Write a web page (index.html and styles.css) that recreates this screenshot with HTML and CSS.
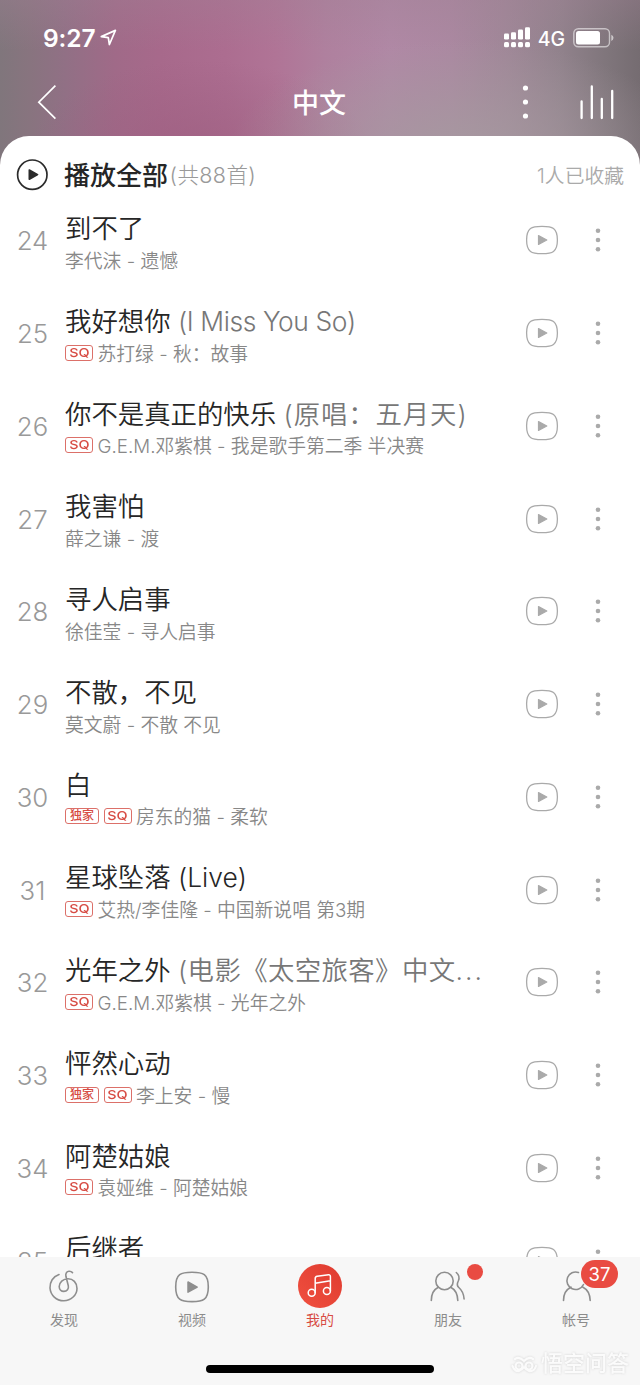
FILE: index.html
```html
<!DOCTYPE html>
<html lang="zh-CN">
<head>
<meta charset="utf-8">
<title>中文</title>
<link rel="stylesheet" href="styles.css">
</head>
<body>
<svg class="defs" width="0" height="0">
  <symbol id="mv" viewBox="0 0 34 30"><path d="M17 1.300C22 1.300 26 1.500 28.500 3.500 31.700 6 32.400 10 32.400 15S31.700 24 28.500 26.500C26 28.500 22 28.700 17 28.700S8 28.500 5.500 26.500C2.300 24 1.600 20 1.600 15S2.300 6 5.500 3.500C8 1.500 12 1.300 17 1.300Z" fill="none" stroke="currentColor" stroke-width="1.300"/><path d="M13.500 10.600V19.400L21.800 15Z" fill="currentColor" stroke="currentColor" stroke-width="1.200" stroke-linejoin="round"/></symbol>
  <symbol id="more" viewBox="0 0 6 26"><g fill="currentColor"><circle cx="3" cy="3.700" r="2.300"/><circle cx="3" cy="13" r="2.300"/><circle cx="3" cy="22.300" r="2.300"/></g></symbol>
</svg>
<div class="phone">
  <div class="status">
    <span class="time">9:27</span>
    <svg class="loc" width="17" height="17" viewBox="0 0 17 17"><path d="M1.300 7.600L15.400 1.400 9.400 15.500 8.300 8.600Z" fill="none" stroke="#fff" stroke-width="1.700" stroke-linejoin="round"/></svg>
    <svg class="signal" width="27" height="21" viewBox="0 0 27 21"><g fill="#fff"><rect x="0" y="6.500" width="5" height="6" rx="1.200"/><rect x="7" y="5.200" width="5" height="7.300" rx="1.200"/><rect x="14" y="2.500" width="5" height="10" rx="1.200"/><rect x="21" y="0.300" width="5" height="12.200" rx="1.200"/><rect x="0" y="15" width="5" height="5.200" rx="1.500"/><rect x="7" y="15" width="5" height="5.200" rx="1.500"/><rect x="14" y="15" width="5" height="5.200" rx="1.500"/><rect x="21" y="15" width="5" height="5.200" rx="1.500"/></g></svg>
    <span class="net">4G</span>
    <svg class="battery" width="42" height="20" viewBox="0 0 42 20"><rect x="0.800" y="0.800" width="35.700" height="18" rx="4.500" fill="none" stroke="#fff" stroke-opacity=".55" stroke-width="1.400"/><rect x="3" y="3" width="24" height="13.600" rx="2.500" fill="#fff"/><path d="M38.300 6.700Q40.500 7.500 40.500 9.800T38.300 12.900Z" fill="#fff" fill-opacity=".6"/></svg>
  </div>
  <div class="nav">
    <svg width="20" height="36" viewBox="0 0 20 36"><path d="M18.400 1.600L1.800 18.200 18.400 34.600" fill="none" stroke="#fff" stroke-width="1.700"/></svg>
    <h1 class="heading">中文</h1>
    <div class="nav-actions">
      <svg width="6" height="36" viewBox="0 0 6 36"><g fill="#fff"><circle cx="3.500" cy="4" r="2.600"/><circle cx="3.500" cy="18" r="2.600"/><circle cx="3.500" cy="32" r="2.600"/></g></svg>
      <svg width="36" height="36" viewBox="0 0 36 36"><path d="M2.600 17.500V34M12.800 2.500V34M22.800 15V34M33.200 7V34" stroke="#fff" stroke-width="2.300" stroke-linecap="round"/></svg>
    </div>
  </div>
  <main class="sheet">
    <div class="playall">
      <svg width="32" height="32" viewBox="0 0 32 32"><circle cx="16.300" cy="15.700" r="14.700" fill="none" stroke="#2b2b2b" stroke-width="1.700"/><path d="M13.300 11V20.200L21.600 15.600Z" fill="#2b2b2b" stroke="#2b2b2b" stroke-width="1.600" stroke-linejoin="round"/></svg>
      <b class="playall-title">播放全部</b><span class="count">(共88首)</span><span class="saved">1人已收藏</span>
    </div>
    <div class="list">
      <div class="row"><span class="num">24</span><div class="info"><div class="title">到不了</div><div class="sub">李代沫 - 遗憾</div></div><svg class="mv"><use href="#mv"/></svg><svg class="more"><use href="#more"/></svg></div>
      <div class="row"><span class="num">25</span><div class="info"><div class="title">我好想你 <span class="alt latin">(I Miss You So)</span></div><div class="sub"><i class="tag sq"><span>SQ</span></i>苏打绿 - 秋：故事</div></div><svg class="mv"><use href="#mv"/></svg><svg class="more"><use href="#more"/></svg></div>
      <div class="row"><span class="num">26</span><div class="info"><div class="title">你不是真正的快乐 <span class="alt wide">(原唱：五月天)</span></div><div class="sub"><i class="tag sq"><span>SQ</span></i>G.E.M.邓紫棋 - 我是歌手第二季 半决赛</div></div><svg class="mv"><use href="#mv"/></svg><svg class="more"><use href="#more"/></svg></div>
      <div class="row"><span class="num">27</span><div class="info"><div class="title">我害怕</div><div class="sub">薛之谦 - 渡</div></div><svg class="mv"><use href="#mv"/></svg><svg class="more"><use href="#more"/></svg></div>
      <div class="row"><span class="num">28</span><div class="info"><div class="title">寻人启事</div><div class="sub">徐佳莹 - 寻人启事</div></div><svg class="mv"><use href="#mv"/></svg><svg class="more"><use href="#more"/></svg></div>
      <div class="row"><span class="num">29</span><div class="info"><div class="title">不散，不见</div><div class="sub">莫文蔚 - 不散 不见</div></div><svg class="mv"><use href="#mv"/></svg><svg class="more"><use href="#more"/></svg></div>
      <div class="row"><span class="num">30</span><div class="info"><div class="title">白</div><div class="sub"><i class="tag only">独家</i><i class="tag sq"><span>SQ</span></i>房东的猫 - 柔软</div></div><svg class="mv"><use href="#mv"/></svg><svg class="more"><use href="#more"/></svg></div>
      <div class="row"><span class="num">31</span><div class="info"><div class="title">星球坠落 (Live)</div><div class="sub"><i class="tag sq"><span>SQ</span></i>艾热/李佳隆 - 中国新说唱 第3期</div></div><svg class="mv"><use href="#mv"/></svg><svg class="more"><use href="#more"/></svg></div>
      <div class="row"><span class="num">32</span><div class="info"><div class="title">光年之外 <span class="alt film">(电影《太空旅客》中文<span class="dots">...</span></span></div><div class="sub"><i class="tag sq"><span>SQ</span></i>G.E.M.邓紫棋 - 光年之外</div></div><svg class="mv"><use href="#mv"/></svg><svg class="more"><use href="#more"/></svg></div>
      <div class="row"><span class="num">33</span><div class="info"><div class="title">怦然心动</div><div class="sub"><i class="tag only">独家</i><i class="tag sq"><span>SQ</span></i>李上安 - 慢</div></div><svg class="mv"><use href="#mv"/></svg><svg class="more"><use href="#more"/></svg></div>
      <div class="row"><span class="num">34</span><div class="info"><div class="title">阿楚姑娘</div><div class="sub"><i class="tag sq"><span>SQ</span></i>袁娅维 - 阿楚姑娘</div></div><svg class="mv"><use href="#mv"/></svg><svg class="more"><use href="#more"/></svg></div>
      <div class="row"><span class="num">35</span><div class="info"><div class="title">后继者</div><div class="sub"></div></div><svg class="mv"><use href="#mv"/></svg><svg class="more"><use href="#more"/></svg></div>
    </div>
  </main>
  <footer class="tabs">
    <div class="tab"><div class="icon"><svg width="44" height="44" viewBox="0 0 44 44"><path d="M17 10.500C11 12.500 7.700 18 8 24 8.500 31.200 14.300 36.700 21.700 36.700S35 31 35 24.500C35 18.500 31 14.800 26 14.800 21 14.800 17.200 18.300 17.200 22.600 17.200 25.600 19.300 27.400 21.800 27.400 25 27.400 27 25 26.300 21.700L23.900 12.300C23.400 9.600 24.500 7.500 27 7.300 28.500 7.200 29.700 7.700 30.500 8.600" fill="none" stroke="#8e8e8e" stroke-width="1.600" stroke-linecap="round"/></svg></div><span>发现</span></div>
    <div class="tab"><div class="icon"><svg width="44" height="44" viewBox="0 0 44 44"><path d="M22 8.200C27 8.200 31.500 8.500 34.300 10.700 37.600 13.300 38.300 17.500 38.300 22.900S37.600 32.500 34.300 35.100C31.500 37.300 27 37.600 22 37.600S12.500 37.300 9.700 35.100C6.400 32.500 5.700 28.300 5.700 22.900S6.400 13.300 9.700 10.700C12.500 8.500 17 8.200 22 8.200Z" fill="none" stroke="#8e8e8e" stroke-width="1.600"/><path d="M18 18V28.200L27.200 23.100Z" fill="#8e8e8e" stroke="#8e8e8e" stroke-width="1.500" stroke-linejoin="round"/></svg></div><span>视频</span></div>
    <div class="tab active"><div class="icon music"><svg width="44" height="44" viewBox="0 0 44 44"><g fill="none" stroke="#fff" stroke-width="1.500" stroke-linecap="round" stroke-linejoin="round"><circle cx="13.700" cy="28.700" r="3.500"/><circle cx="28.900" cy="27" r="3.500"/><path d="M17.200 28.700V14.500Q17.200 12.500 19.200 12.200L30.600 10.800Q32.400 10.700 32.400 12.500V27M17.200 19.200L32.400 16.700"/></g></svg></div><span>我的</span></div>
    <div class="tab"><div class="icon"><svg width="44" height="44" viewBox="0 0 44 44"><g fill="none" stroke="#8e8e8e" stroke-width="1.600" stroke-linecap="round"><circle cx="18.500" cy="17" r="8.700"/><path d="M5.300 36.500C5.300 30.500 7.800 25.500 12.300 23.200M24.700 23.200C29.300 25.500 31.600 30.500 31.800 36.500M30.300 8.500C33.300 11 33.600 14 32.300 17 31 19.500 31.100 22 32.800 23.500 36.300 26.500 37.800 30.500 38.100 35"/></g></svg><b class="dot"></b></div><span>朋友</span></div>
    <div class="tab"><div class="icon"><svg width="44" height="44" viewBox="0 0 44 44"><g fill="none" stroke="#8e8e8e" stroke-width="1.600" stroke-linecap="round"><path d="M24.500 8.500A8.700 8.700 0 1 0 29.500 20.500M9.500 36.500C9.500 30.500 12 25.500 17 23.200M29 23.200C33.500 25.500 36 30.500 36.200 36.500"/></g></svg><b class="badge">37</b></div><span>帐号</span></div>
    <div class="home"></div>
    <div class="mark"><svg width="27" height="20" viewBox="0 0 27 20"><g fill="none" stroke="#fbfbfb" stroke-width="2.200" stroke-linecap="round"><circle cx="8" cy="13" r="3.500"/><circle cx="18" cy="13" r="3.500"/><path d="M4 6Q8 3 13 8 18 3 22 6M1.500 13Q4 19 8 18 11 17 13 14 15 17 18 18 23 19 25 13"/></g></svg><span>悟空问答</span></div>
  </footer>
</div>
</body>
</html>
```

FILE: styles.css
```css
* { box-sizing: border-box; }
body { margin: 0; background: #fff; font-family: Inter, "Noto Sans CJK SC", sans-serif; }
.defs { position: absolute; }
svg { display: block; flex: none; }
.phone {
  width: 640px; height: 1385px; overflow: hidden; display: flex; flex-direction: column;
  background:
    radial-gradient(ellipse 230px 110px at 460px 150px, rgba(166,154,160,.9), rgba(166,154,160,0)),
    radial-gradient(ellipse 170px 90px at 200px 150px, rgba(155,92,126,.6), rgba(155,92,126,0)),
    linear-gradient(180deg, rgba(160,128,148,.35) 0, rgba(160,128,148,0) 50px),
    linear-gradient(90deg, #80767c 0, #88747f 30px, #917085 65px, #a06a88 115px, #a7698b 160px, #ac6d90 225px, #b07496 275px, #af809e 325px, #b088a5 390px, #ab88a1 450px, #9f8797 510px, #91828c 560px, #80767c 605px, #756c71 640px);
}
.status { height: 76px; padding: 0 26px 0 43px; display: flex; align-items: center; color: #fff; }
.time { font-size: 24.500px; font-weight: 600; letter-spacing: -.1px; }
.loc { margin: 0 0 2px 5px; }
.signal { margin: 0 -1px 1px auto; }
.net { font-size: 19.500px; font-weight: 500; margin: 2px 8px 0 8px; }
.battery { margin-right: -1px; }
.nav { height: 60px; padding: 0 25px 8px 37px; display: grid; grid-template-columns: 1fr auto 1fr; align-items: center; }
.heading { margin: 3px 0 0 -14px; color: #fff; font-size: 27px; font-weight: 500; line-height: 36px; }
.nav-actions { display: flex; justify-content: flex-end; gap: 51px; }
.sheet { flex: 1; min-height: 0; background: #fff; border-radius: 29px 29px 0 0; overflow: hidden; }
.playall { height: 58px; padding: 20px 16px 0 16px; display: flex; align-items: center; color: #999; }
.playall-title { margin: -4px 0 0 16px; color: #262626; font-size: 26px; font-weight: 500; }
.count { font-size: 21.500px; font-weight: 300; margin: -3px 0 0 1.500px; letter-spacing: .4px; }
.saved { margin: -2px 0 0 auto; font-size: 19.800px; font-weight: 350; color: #aaa; }
.row { height: 92.750px; display: flex; align-items: center; }
.num { width: 65px; padding-top: 1px; text-align: center; font-size: 25.800px; font-weight: 350; color: #999; }
.info { width: 460px; height: 70px; padding-top: 4.700px; white-space: nowrap; }
.title { font-size: 26.400px; line-height: 37px; height: 37.800px; color: #262626; font-weight: 350; }
.alt { color: #777; }
.latin { letter-spacing: -.4px; }
.wide { letter-spacing: .9px; }
.film { letter-spacing: .4px; }
.dots { letter-spacing: 2px; }
.sub { display: flex; align-items: center; font-size: 18.800px; line-height: 28px; color: #888; font-weight: 350; white-space: pre; }
.tag { height: 16px; margin: -4px 4.500px 0 0; border: 1px solid #dc7069; border-radius: 3px; color: #d74b43; font-style: normal; display: flex; align-items: center; justify-content: center; }
.sq { width: 28px; font-size: 12px; font-weight: 500; line-height: 14px; }
.sq span { transform: scaleX(1.200); }
.only { width: 34px; font-size: 12px; font-weight: 500; line-height: 14px; }
.mv { width: 34px; height: 30px; color: #aaa; }
.more { width: 6px; height: 26px; margin-left: 36px; color: #aaa; }
.tabs { position: relative; height: 128px; flex: none; display: grid; grid-template-columns: repeat(5, 1fr); background: #f7f7f7; }
.tab { display: flex; flex-direction: column; align-items: center; padding-top: 7px; font-size: 14px; line-height: 24px; color: #8c8c8c; }
.icon { position: relative; width: 44px; height: 44px; }
.active { color: #d84b43; }
.music { border-radius: 50%; background: linear-gradient(45deg, #f0503f, #df3b30); }
.dot { position: absolute; left: 40.500px; top: 0; width: 16px; height: 16px; border-radius: 50%; background: #e94b42; }
.badge { position: absolute; left: 27px; top: -4px; width: 37px; height: 28px; border-radius: 14px; background: #e94b42; color: #fff; text-align: center; font-size: 18.500px; line-height: 28px; font-weight: 400; }
.home { position: absolute; left: 206px; top: 108px; width: 228px; height: 8px; border-radius: 4px; background: #000; }
.mark { position: absolute; left: 511px; top: 92px; display: flex; align-items: center; gap: 3px; color: #fbfbfb; font-size: 22px; font-weight: 500; line-height: 28px; filter: drop-shadow(0 0 1px #d2d2d2); white-space: nowrap; }
```
